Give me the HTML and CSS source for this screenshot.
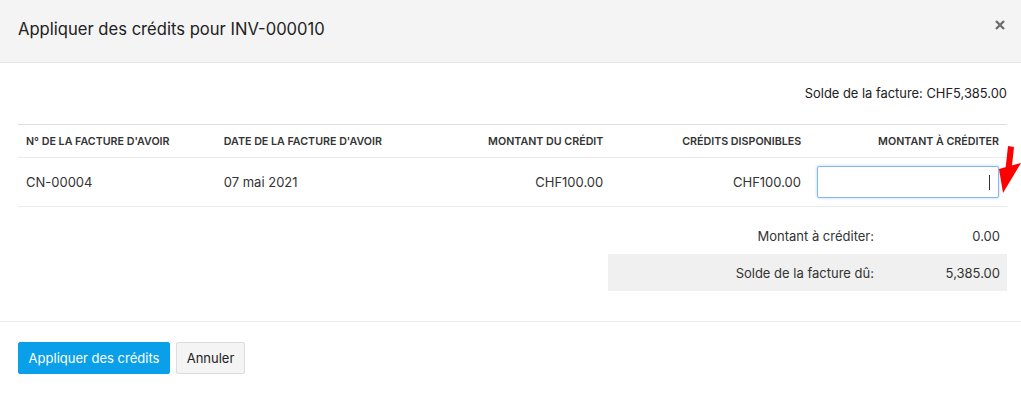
FILE: index.html
```html
<!DOCTYPE html>
<html lang="fr">
<head>
<meta charset="utf-8">
<title>Appliquer des crédits</title>
<link rel="stylesheet" href="styles.css">
</head>
<body>
<div class="modal">
  <div class="modal-header">
    <h1 class="modal-title">Appliquer des crédits pour INV-000010</h1>
    <svg class="close" width="10" height="10" viewBox="0 0 10 10">
      <path d="M1 1 L9 9 M9 1 L1 9" stroke="#6e6e6e" stroke-width="2.4" stroke-linecap="butt"/>
    </svg>
  </div>
  <div class="modal-body">
    <div class="balance">Solde de la facture: CHF5,385.00</div>
    <div class="table">
      <div class="row head">
        <div class="cell">N° DE LA FACTURE D'AVOIR</div>
        <div class="cell">DATE DE LA FACTURE D'AVOIR</div>
        <div class="cell right">MONTANT DU CRÉDIT</div>
        <div class="cell right">CRÉDITS DISPONIBLES</div>
        <div class="cell right">MONTANT À CRÉDITER</div>
      </div>
      <div class="row data">
        <div class="cell">CN-00004</div>
        <div class="cell">07 mai 2021</div>
        <div class="cell right">CHF100.00</div>
        <div class="cell right">CHF100.00</div>
        <div class="cell right input-cell">
          <div class="input"><span class="caret"></span></div>
          <svg class="arrow" width="22" height="48" viewBox="0 0 22 48">
            <polygon points="9,0 15,1 12.5,24 6.5,23" fill="#ff0000"/>
            <polygon points="0,23 22,17 4,47" fill="#ff0000"/>
          </svg>
        </div>
      </div>
    </div>
    <div class="totals">
      <div class="trow">
        <span class="tlabel">Montant à créditer:</span>
        <span class="tvalue">0.00</span>
      </div>
      <div class="trow shaded">
        <span class="tlabel">Solde de la facture dû:</span>
        <span class="tvalue">5,385.00</span>
      </div>
    </div>
  </div>
  <div class="modal-footer">
    <button class="btn primary">Appliquer des crédits</button>
    <button class="btn secondary">Annuler</button>
  </div>
</div>
</body>
</html>
```
FILE: styles.css
```css
* { box-sizing: border-box; }
html, body { margin: 0; padding: 0; background: #fff; }
body {
  font-family: Inter, "Noto Sans", "Liberation Sans", sans-serif;
  color: #333;
  font-size: 13px;
}
.modal { width: 1021px; }
.modal-header {
  height: 63px;
  background: #f4f4f4;
  border-bottom: 1px solid #e6e6e6;
  display: flex;
  align-items: center;
  justify-content: space-between;
  padding: 0 16px 0 18px;
}
.modal-title {
  margin: 0;
  font-size: 16.6px;
  font-weight: 400;
  color: #222;
  padding-bottom: 5px;
}
.close {
  display: block;
  margin-top: -12px;
}
.modal-body {
  padding: 0 14px 30px 18px;
}
.balance {
  text-align: right;
  height: 61px;
  line-height: 62px;
  font-size: 12.9px;
  color: #222;
}
.table {
  border-top: 1px solid #dedede;
}
.row {
  display: grid;
  grid-template-columns: repeat(5, 1fr);
  border-bottom: 1px solid #eaeaea;
}
.row.head { height: 33px; align-items: center; }
.row.data { height: 49px; align-items: center; }
.cell {
  padding: 0 8px;
  white-space: nowrap;
}
.head .cell {
  font-size: 10.7px;
  font-weight: 600;
  color: #333;
}
.data .cell { font-size: 13px; color: #333; }
.right { text-align: right; }
.input-cell {
  position: relative;
  display: flex;
  justify-content: flex-end;
}
.input {
  width: 182px;
  height: 32px;
  border: 1px solid #80b8f0;
  border-radius: 2px;
  box-shadow: 0 0 3px rgba(80, 150, 240, 0.45);
  background: #fff;
  display: flex;
  align-items: center;
  justify-content: flex-end;
  padding-right: 8px;
}
.caret {
  width: 1px;
  height: 15px;
  background: #333;
}
.arrow {
  position: absolute;
  display: block;
  right: -14px;
  top: -20px;
}
.totals {
  margin-left: 590px;
  padding-top: 11px;
}
.trow {
  display: grid;
  grid-template-columns: 1fr 118px;
  height: 36px;
  align-items: center;
  padding-right: 7px;
}
.trow.shaded {
  background: #f0f0f0;
  height: 37px;
}
.tlabel { text-align: right; padding-right: 8px; }
.tvalue { text-align: right; }
.modal-footer {
  border-top: 1px solid #ececec;
  padding: 20px 18px;
  display: flex;
  gap: 6px;
}
.btn {
  font-family: inherit;
  font-size: 13px;
  height: 32px;
  border-radius: 2px;
  padding: 0;
  cursor: pointer;
  white-space: nowrap;
}
.btn.primary {
  background: #0aa0e9;
  color: #fff;
  border: 1px solid #0aa0e9;
  width: 152px;
}
.btn.secondary {
  background: #f4f4f4;
  color: #222;
  border: 1px solid #dcdcdc;
  width: 69px;
}
```
